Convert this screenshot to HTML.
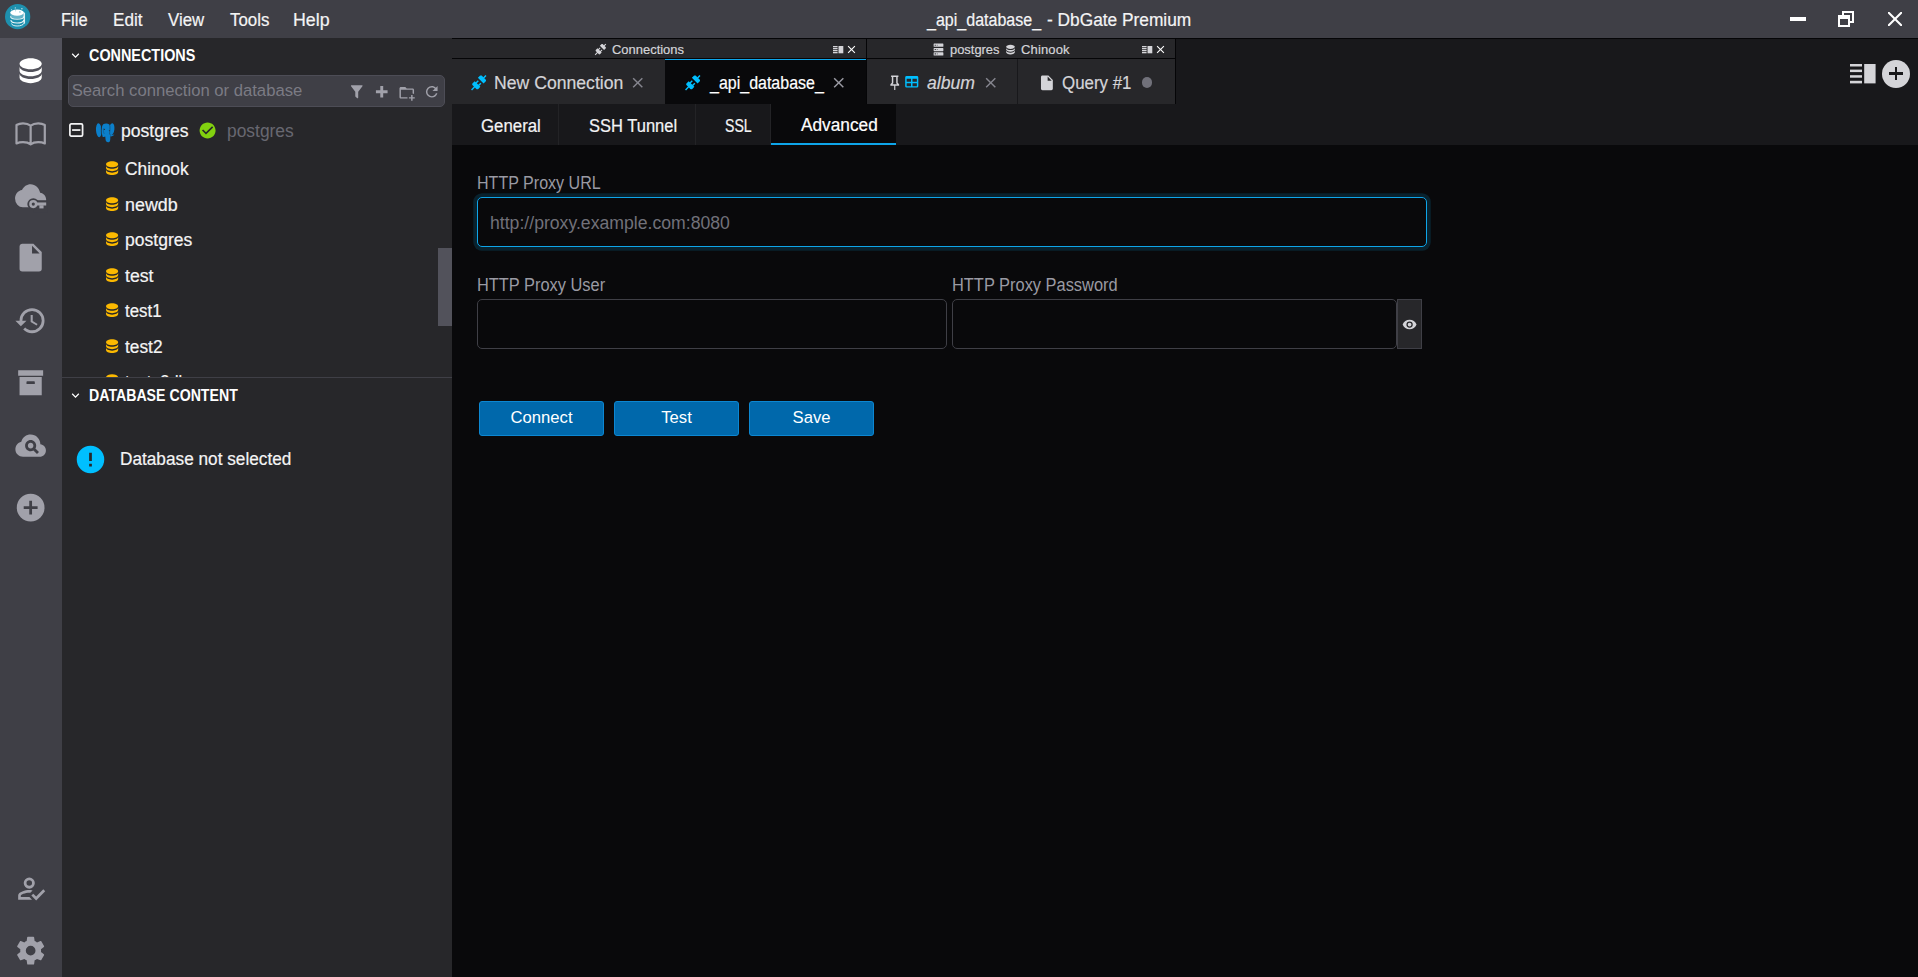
<!DOCTYPE html>
<html lang="en"><head><meta charset="utf-8">
<title>_api_database_ - DbGate Premium</title>
<style>
html,body{margin:0;padding:0;}
body{position:relative;width:1918px;height:977px;overflow:hidden;background:#09090b;font-family:"Liberation Sans", sans-serif;color:#f4f4f5;}
div,span,button{box-sizing:border-box;}
.t{position:absolute;white-space:nowrap;line-height:1;transform-origin:0 0;}
.i{position:absolute;display:block;overflow:visible;}
.b{position:absolute;}
#titlebar{left:0;top:0;width:1918px;height:38px;background:#3f3f46;}
#iconbar{left:0;top:38px;width:62px;height:939px;background:#3f3f46;}
#iconsel{left:0;top:38px;width:62px;height:62px;background:#52525b;}
#left{left:62px;top:38px;width:390px;height:939px;background:#27272a;}
#leftclip{left:62px;top:38px;width:390px;height:339px;overflow:hidden;}
#tabstrip{left:452px;top:38px;width:1466px;height:66px;background:#18181b;}
#subtabs{left:452px;top:104px;width:1466px;height:41px;background:#18181b;}
#content{left:452px;top:145px;width:1466px;height:832px;background:#09090b;}
.inp{position:absolute;border:1px solid #3f3f46;border-radius:5px;background:#09090b;}
.btn{position:absolute;top:401px;width:125px;height:35px;border:1px solid #0c87d2;border-radius:3px;background:#0068ab;color:#fff;font-family:"Liberation Sans", sans-serif;font-size:16.67px;padding:0 0 3px 0;margin:0;text-align:center;line-height:29px;}

</style></head><body>
<div id="titlebar" class="b"></div>
<svg class="i" style="left:5.00px;top:3.70px;width:25.3px;height:25.3px;" viewBox="0 0 25.3 25.3"><circle cx="12.650" cy="12.650" r="12.650" fill="#1e90ae"/><ellipse cx="12.100" cy="8.600" rx="6.800" ry="3.100" fill="#ffffff"/><path d="M5.300 8.600V11.600C5.300 13.300 8.300 14.700 12.100 14.700C15.900 14.700 18.900 13.300 18.900 11.600V8.600Z" fill="#ffffff" opacity="0.32"/><path d="M5.500 12.300C5.500 14.000 8.400 15.300 12.100 15.300C15.800 15.300 18.900 14.000 18.900 12.300" fill="none" stroke="#ffffff" stroke-width="1.100" opacity="0.85"/><path d="M5.900 16.000C5.900 17.700 8.600 19.000 12.100 19.000C15.600 19.000 18.900 17.700 18.900 16.000" fill="none" stroke="#ffffff" stroke-width="1.100" opacity="0.9"/><path d="M6.500 19.500C6.800 21.000 9.000 22.000 12.100 22.000C15.200 22.000 18.500 21.000 18.900 19.300" fill="none" stroke="#ffffff" stroke-width="1.000" opacity="0.85"/><path d="M19.300 8.600V19.600" fill="none" stroke="#ffffff" stroke-width="1.500" opacity="0.85"/><circle cx="10.300" cy="3.900" r="0.600" fill="#fff" opacity="0.8"/><circle cx="16.900" cy="4.700" r="0.700" fill="#fff" opacity="0.8"/><circle cx="6.500" cy="5.700" r="0.550" fill="#fff" opacity="0.8"/><circle cx="14.900" cy="7.900" r="0.700" fill="#1e90ae" opacity="0.7"/><circle cx="10.600" cy="6.700" r="0.500" fill="#1e90ae" opacity="0.6"/></svg>
<span class="t" style="left:61.38px;top:10.00px;font-size:18px;line-height:20px;color:#f4f4f5;transform:scaleX(0.9181);-webkit-text-stroke:0.2px currentColor;">File</span>
<span class="t" style="left:112.65px;top:10.00px;font-size:18px;line-height:20px;color:#f4f4f5;transform:scaleX(0.9528);-webkit-text-stroke:0.2px currentColor;">Edit</span>
<span class="t" style="left:167.50px;top:10.00px;font-size:18px;line-height:20px;color:#f4f4f5;transform:scaleX(0.9347);-webkit-text-stroke:0.2px currentColor;">View</span>
<span class="t" style="left:229.70px;top:10.00px;font-size:18px;line-height:20px;color:#f4f4f5;transform:scaleX(0.9376);-webkit-text-stroke:0.2px currentColor;">Tools</span>
<span class="t" style="left:293.11px;top:10.00px;font-size:18px;line-height:20px;color:#f4f4f5;transform:scaleX(0.9886);-webkit-text-stroke:0.2px currentColor;">Help</span>
<span class="t" style="left:926.99px;top:10.00px;font-size:18px;line-height:20px;color:#f4f4f5;transform:scaleX(0.8908);-webkit-text-stroke:0.2px currentColor;">_api_database_</span>
<span class="t" style="left:1047.00px;top:10.00px;font-size:18px;line-height:20px;color:#f4f4f5;transform:scaleX(0.9615);-webkit-text-stroke:0.2px currentColor;">- DbGate Premium</span>
<svg class="i" style="left:1786.00px;top:7.00px;width:24px;height:24px;" viewBox="0 0 24 24"><path fill="#fff" d="M20,14H4V10H20"/></svg>
<svg class="i" style="left:1834.20px;top:7.00px;width:24px;height:24px;" viewBox="0 0 24 24"><path fill="#fff" d="M4,8H8V4H20V16H16V20H4V8M16,8V14H18V6H10V8H16M6,12V18H14V12H6Z"/></svg>
<svg class="i" style="left:1882.80px;top:7.00px;width:24px;height:24px;" viewBox="0 0 24 24"><path fill="#fff" d="M13.46,12L19,17.54V19H17.54L12,13.46L6.46,19H5V17.54L10.54,12L5,6.46V5H6.46L12,10.54L17.54,5H19V6.46L13.46,12Z"/></svg>
<div id="iconbar" class="b"></div><div id="iconsel" class="b"></div>
<svg class="i" style="left:13.85px;top:53.75px;width:33.3px;height:33.3px;" viewBox="0 0 24 24"><path fill="#ffffff" d="M12,3C7.58,3 4,4.79 4,7C4,9.21 7.58,11 12,11C16.42,11 20,9.21 20,7C20,4.79 16.42,3 12,3M4,9V12C4,14.21 7.58,16 12,16C16.42,16 20,14.21 20,12V9C20,11.21 16.42,13 12,13C7.58,13 4,11.21 4,9M4,14V17C4,19.21 7.58,21 12,21C16.42,21 20,19.21 20,17V14C20,16.21 16.42,18 12,18C7.58,18 4,16.21 4,14Z"/></svg>
<svg class="i" style="left:13.85px;top:116.25px;width:33.3px;height:33.3px;" viewBox="0 0 24 24"><path fill="none" stroke="#a1a1aa" stroke-width="1.6" stroke-linejoin="round" d="M12 7.000C10.500 5.800 8.500 5.300 6.500 5.300C4.800 5.300 3.100 5.700 1.800 6.500V19.800C3.100 19.200 4.800 18.900 6.500 18.900C8.500 18.900 10.500 19.300 12 20.500C13.500 19.300 15.500 18.900 17.500 18.900C19.200 18.900 20.900 19.200 22.200 19.800V6.500C20.900 5.700 19.200 5.300 17.500 5.300C15.500 5.300 13.500 5.800 12 7.000ZM12 7.000V20.500"/></svg>
<svg class="i" style="left:13.85px;top:178.75px;width:33.3px;height:33.3px;" viewBox="0 0 24 24"><path fill="#a1a1aa" transform="translate(0.76 -0.45) scale(0.935 1.0375)" d="M19.35,10.03C18.67,6.59 15.64,4 12,4C9.11,4 6.6,5.64 5.35,8.03C2.34,8.36 0,10.9 0,14A6,6 0 0,0 6,20H19A5,5 0 0,0 24,15C24,12.36 21.95,10.22 19.35,10.03Z"/><rect x="13.900" y="15.300" width="10.100" height="8.700" fill="#3f3f46"/><circle cx="13.900" cy="18.100" r="4.300" fill="#3f3f46"/><circle cx="13.900" cy="18.100" r="2.950" fill="#a1a1aa"/><circle cx="13.900" cy="18.100" r="1.150" fill="#3f3f46"/><rect x="15.500" y="16.900" width="7.700" height="2.200" fill="#a1a1aa"/><rect x="18.300" y="18.900" width="3.000" height="2.300" fill="#a1a1aa"/></svg>
<svg class="i" style="left:13.85px;top:241.25px;width:33.3px;height:33.3px;" viewBox="0 0 24 24"><path fill="#a1a1aa" d="M13,9V3.5L18.5,9M6,2C4.89,2 4,2.89 4,4V20A2,2 0 0,0 6,22H18A2,2 0 0,0 20,20V8L14,2H6Z"/></svg>
<svg class="i" style="left:13.85px;top:303.75px;width:33.3px;height:33.3px;" viewBox="0 0 24 24"><path fill="#a1a1aa" d="M13.5,8H12V13L16.28,15.54L17,14.33L13.5,12.25V8M13,3A9,9 0 0,0 4,12H1L4.96,16.03L9,12H6A7,7 0 0,1 13,5A7,7 0 0,1 20,12A7,7 0 0,1 13,19C11.07,19 9.32,18.21 8.06,16.94L6.64,18.36C8.27,20 10.5,21 13,21A9,9 0 0,0 22,12A9,9 0 0,0 13,3"/></svg>
<svg class="i" style="left:13.85px;top:366.25px;width:33.3px;height:33.3px;" viewBox="0 0 24 24"><path fill="#a1a1aa" d="M3,3H21V7H3V3M4,8H20V21H4V8M9.5,11A0.5,0.5 0 0,0 9,11.5V13H15V11.5A0.5,0.5 0 0,0 14.5,11H9.5Z"/></svg>
<svg class="i" style="left:13.85px;top:428.75px;width:33.3px;height:33.3px;" viewBox="0 0 24 24"><path fill="#a1a1aa" d="M21.86 12.5C21.1 11.63 20.15 11.13 19 11C19 9.05 18.32 7.4 16.96 6.04C15.6 4.68 13.95 4 12 4C10.42 4 9 4.47 7.75 5.43S5.67 7.62 5.25 9.15C4 9.43 2.96 10.08 2.17 11.1S1 13.28 1 14.58C1 16.09 1.54 17.38 2.61 18.43C3.69 19.5 5 20 6.5 20H18.5C19.75 20 20.81 19.56 21.69 18.69C22.56 17.81 23 16.75 23 15.5C23 14.35 22.62 13.35 21.86 12.5M16.57 18L14 15.43C13.43 15.79 12.74 16 12 16C9.79 16 8 14.21 8 12S9.79 8 12 8 16 9.79 16 12C16 12.74 15.79 13.43 15.43 14L18 16.57L16.57 18M14 12C14 13.11 13.11 14 12 14S10 13.11 10 12 10.9 10 12 10 14 10.9 14 12Z"/></svg>
<svg class="i" style="left:13.85px;top:491.25px;width:33.3px;height:33.3px;" viewBox="0 0 24 24"><path fill="#a1a1aa" d="M17,13H13V17H11V13H7V11H11V7H13V11H17M12,2A10,10 0 0,0 2,12A10,10 0 0,0 12,22A10,10 0 0,0 22,12A10,10 0 0,0 12,2Z"/></svg>
<svg class="i" style="left:13.75px;top:871.65px;width:33.3px;height:33.3px;" viewBox="0 0 24 24"><path fill="#a1a1aa" d="M21.1,12.5L22.5,13.91L15.97,20.5L12.5,17L13.9,15.59L15.97,17.67L21.1,12.5M11,4A4,4 0 0,1 15,8A4,4 0 0,1 11,12A4,4 0 0,1 7,8A4,4 0 0,1 11,4M11,6A2,2 0 0,0 9,8A2,2 0 0,0 11,10A2,2 0 0,0 13,8A2,2 0 0,0 11,6M11,13C11.68,13 12.5,13.09 13.41,13.26L11.74,14.93L11,14.9C8.03,14.9 4.9,16.36 4.9,17V18.1H11.1L13,20H3V17C3,14.34 8.33,13 11,13Z"/></svg>
<svg class="i" style="left:13.85px;top:934.05px;width:33.3px;height:33.3px;" viewBox="0 0 24 24"><path fill="#a1a1aa" d="M12,15.5A3.5,3.5 0 0,1 8.5,12A3.5,3.5 0 0,1 12,8.5A3.5,3.5 0 0,1 15.5,12A3.5,3.5 0 0,1 12,15.5M19.43,12.97C19.47,12.65 19.5,12.33 19.5,12C19.5,11.67 19.47,11.34 19.43,11L21.54,9.37C21.73,9.22 21.78,8.95 21.66,8.73L19.66,5.27C19.54,5.05 19.27,4.96 19.05,5.05L16.56,6.05C16.04,5.66 15.5,5.32 14.87,5.07L14.5,2.42C14.46,2.18 14.25,2 14,2H10C9.75,2 9.54,2.18 9.5,2.42L9.13,5.07C8.5,5.32 7.96,5.66 7.44,6.05L4.95,5.05C4.73,4.96 4.46,5.05 4.34,5.27L2.34,8.73C2.21,8.95 2.27,9.22 2.46,9.37L4.57,11C4.53,11.34 4.5,11.67 4.5,12C4.5,12.33 4.53,12.65 4.57,12.97L2.46,14.63C2.27,14.78 2.21,15.05 2.34,15.27L4.34,18.73C4.46,18.95 4.73,19.03 4.95,18.95L7.44,17.94C7.96,18.34 8.5,18.68 9.13,18.93L9.5,21.58C9.54,21.82 9.75,22 10,22H14C14.25,22 14.46,21.82 14.5,21.58L14.87,18.93C15.5,18.67 16.04,18.34 16.56,17.94L19.05,18.95C19.27,19.03 19.54,18.95 19.66,18.73L21.66,15.27C21.78,15.05 21.73,14.78 21.54,14.63L19.43,12.97Z"/></svg>
<div id="left" class="b"></div>
<svg class="i" style="left:67.80px;top:47.50px;width:15px;height:15px;" viewBox="0 0 24 24"><path fill="#ffffff" d="M7.41,8.58L12,13.17L16.59,8.58L18,10L12,16L6,10L7.41,8.58Z"/></svg>
<div class="b" style="left:68px;top:75px;width:377px;height:32px;background:#3f3f46;border:1px solid #4d4d56;border-radius:5px;"></div>
<svg class="i" style="left:348.25px;top:83.45px;width:17.5px;height:17.5px;" viewBox="0 0 24 24"><path fill="#a1a1aa" d="M14,12V19.88C14.04,20.18 13.94,20.5 13.71,20.71C13.32,21.1 12.69,21.1 12.3,20.71L10.29,18.7C10.06,18.47 9.96,18.16 10,17.87V12H9.97L4.21,4.62C3.87,4.19 3.95,3.56 4.38,3.22C4.57,3.08 4.78,3 5,3V3H19V3C19.22,3 19.43,3.08 19.62,3.22C20.05,3.56 20.13,4.19 19.79,4.62L14.03,12H14Z"/></svg>
<svg class="i" style="left:373.05px;top:83.45px;width:17.5px;height:17.5px;" viewBox="0 0 24 24"><path fill="#a1a1aa" d="M20 14H14V20H10V14H4V10H10V4H14V10H20V14Z"/></svg>
<svg class="i" style="left:398.05px;top:83.65px;width:17.5px;height:17.5px;" viewBox="0 0 24 24"><path fill="#a1a1aa" d="M13 19C13 19.34 13.04 19.67 13.09 20H4C2.9 20 2 19.11 2 18V6C2 4.89 2.89 4 4 4H10L12 6H20C21.1 6 22 6.89 22 8V13.81C21.39 13.46 20.72 13.22 20 13.09V8H4V18H13.09C13.04 18.33 13 18.66 13 19M20 18V15H18V18H15V20H18V23H20V20H23V18H20Z"/></svg>
<svg class="i" style="left:423.25px;top:83.35px;width:17.5px;height:17.5px;" viewBox="0 0 24 24"><path fill="#a1a1aa" d="M17.65,6.35C16.2,4.9 14.21,4 12,4A8,8 0 0,0 4,12A8,8 0 0,0 12,20C15.73,20 18.84,17.45 19.73,14H17.65C16.83,16.33 14.61,18 12,18A6,6 0 0,1 6,12A6,6 0 0,1 12,6C13.66,6 15.14,6.69 16.22,7.78L13,11H20V4L17.65,6.35Z"/></svg>
<svg class="i" style="left:69.20px;top:123.00px;width:14.5px;height:14.0px;" viewBox="0 0 14.2 13.8"><rect x="0.850" y="0.850" width="12.500" height="12.100" rx="1.300" fill="none" stroke="#f4f4f5" stroke-width="1.700"/><rect x="3.000" y="6.100" width="8.200" height="1.700" fill="#f4f4f5"/></svg>
<svg class="i" style="left:95.70px;top:122.80px;width:18.4px;height:19.4px;" viewBox="0 0 18.4 19.4"><g fill="#0b7fca"><ellipse cx="2.800" cy="7.200" rx="2.800" ry="7.000" transform="rotate(-4 2.8 7.2)"/><ellipse cx="15.700" cy="6.100" rx="2.700" ry="6.000" transform="rotate(6 15.7 6.1)"/><path d="M6 4C6 1.500 8 0.400 10.200 0.400C12.600 0.400 14.700 1.800 14.700 4.500C14.700 7.500 14.300 10 14.300 12.500C14.300 14.500 14.500 16.500 14 18C13.500 19.600 11.300 19.800 10.300 18.600C9.300 17.400 9.600 15 9.200 13.600C8.500 14.200 7 14.300 6.500 13.400C5.600 11.500 6 6.500 6 4Z"/><path d="M14.300 11.900C15.600 12.300 17.200 11.900 18.400 11.600C17.700 12.800 15.800 13.700 14.300 13.400Z"/></g><path d="M5.800 1.800C5.000 5.000 5.000 10.500 6.000 13.000M13.600 1.500C14.400 4.000 13.700 9.000 13.500 11.500" stroke="#27272a" stroke-width="0.55" fill="none" opacity="0.8"/><path d="M7.600 5.300C7.200 7.500 7.400 9.500 8.300 11.000" stroke="#27272a" stroke-width="0.5" fill="none" opacity="0.55"/><circle cx="8.400" cy="6.400" r="0.650" fill="#27272a" opacity="0.8"/><circle cx="13.400" cy="7.600" r="0.600" fill="#27272a" opacity="0.7"/></svg>
<svg class="i" style="left:198.30px;top:120.60px;width:19.2px;height:19.2px;" viewBox="0 0 24 24"><path fill="#82d10f" d="M12 2C6.5 2 2 6.5 2 12S6.5 22 12 22 22 17.5 22 12 17.5 2 12 2M10 17L5 12L6.41 10.59L10 14.17L17.59 6.58L19 8L10 17Z"/></svg>
<svg class="i" style="left:102.60px;top:159.20px;width:18.2px;height:18.2px;" viewBox="0 0 24 24"><path fill="#fcb900" d="M12,3C7.58,3 4,4.79 4,7C4,9.21 7.58,11 12,11C16.42,11 20,9.21 20,7C20,4.79 16.42,3 12,3M4,9V12C4,14.21 7.58,16 12,16C16.42,16 20,14.21 20,12V9C20,11.21 16.42,13 12,13C7.58,13 4,11.21 4,9M4,14V17C4,19.21 7.58,21 12,21C16.42,21 20,19.21 20,17V14C20,16.21 16.42,18 12,18C7.58,18 4,16.21 4,14Z"/></svg>
<svg class="i" style="left:102.60px;top:195.00px;width:18.2px;height:18.2px;" viewBox="0 0 24 24"><path fill="#fcb900" d="M12,3C7.58,3 4,4.79 4,7C4,9.21 7.58,11 12,11C16.42,11 20,9.21 20,7C20,4.79 16.42,3 12,3M4,9V12C4,14.21 7.58,16 12,16C16.42,16 20,14.21 20,12V9C20,11.21 16.42,13 12,13C7.58,13 4,11.21 4,9M4,14V17C4,19.21 7.58,21 12,21C16.42,21 20,19.21 20,17V14C20,16.21 16.42,18 12,18C7.58,18 4,16.21 4,14Z"/></svg>
<svg class="i" style="left:102.60px;top:230.20px;width:18.2px;height:18.2px;" viewBox="0 0 24 24"><path fill="#fcb900" d="M12,3C7.58,3 4,4.79 4,7C4,9.21 7.58,11 12,11C16.42,11 20,9.21 20,7C20,4.79 16.42,3 12,3M4,9V12C4,14.21 7.58,16 12,16C16.42,16 20,14.21 20,12V9C20,11.21 16.42,13 12,13C7.58,13 4,11.21 4,9M4,14V17C4,19.21 7.58,21 12,21C16.42,21 20,19.21 20,17V14C20,16.21 16.42,18 12,18C7.58,18 4,16.21 4,14Z"/></svg>
<svg class="i" style="left:102.60px;top:266.10px;width:18.2px;height:18.2px;" viewBox="0 0 24 24"><path fill="#fcb900" d="M12,3C7.58,3 4,4.79 4,7C4,9.21 7.58,11 12,11C16.42,11 20,9.21 20,7C20,4.79 16.42,3 12,3M4,9V12C4,14.21 7.58,16 12,16C16.42,16 20,14.21 20,12V9C20,11.21 16.42,13 12,13C7.58,13 4,11.21 4,9M4,14V17C4,19.21 7.58,21 12,21C16.42,21 20,19.21 20,17V14C20,16.21 16.42,18 12,18C7.58,18 4,16.21 4,14Z"/></svg>
<svg class="i" style="left:102.60px;top:301.10px;width:18.2px;height:18.2px;" viewBox="0 0 24 24"><path fill="#fcb900" d="M12,3C7.58,3 4,4.79 4,7C4,9.21 7.58,11 12,11C16.42,11 20,9.21 20,7C20,4.79 16.42,3 12,3M4,9V12C4,14.21 7.58,16 12,16C16.42,16 20,14.21 20,12V9C20,11.21 16.42,13 12,13C7.58,13 4,11.21 4,9M4,14V17C4,19.21 7.58,21 12,21C16.42,21 20,19.21 20,17V14C20,16.21 16.42,18 12,18C7.58,18 4,16.21 4,14Z"/></svg>
<svg class="i" style="left:102.60px;top:336.70px;width:18.2px;height:18.2px;" viewBox="0 0 24 24"><path fill="#fcb900" d="M12,3C7.58,3 4,4.79 4,7C4,9.21 7.58,11 12,11C16.42,11 20,9.21 20,7C20,4.79 16.42,3 12,3M4,9V12C4,14.21 7.58,16 12,16C16.42,16 20,14.21 20,12V9C20,11.21 16.42,13 12,13C7.58,13 4,11.21 4,9M4,14V17C4,19.21 7.58,21 12,21C16.42,21 20,19.21 20,17V14C20,16.21 16.42,18 12,18C7.58,18 4,16.21 4,14Z"/></svg>
<span class="t" style="left:89.30px;top:47.00px;font-size:16px;line-height:17px;color:#ffffff;transform:scaleX(0.8992);font-weight:700;">CONNECTIONS</span>
<span class="t" style="left:71.70px;top:81.00px;font-size:16.67px;line-height:19px;color:#7b7b84;">Search connection or database</span>
<span class="t" style="left:120.57px;top:121.00px;font-size:18px;line-height:20px;color:#f4f4f5;transform:scaleX(0.9774);-webkit-text-stroke:0.2px currentColor;">postgres</span>
<span class="t" style="left:227.33px;top:121.00px;font-size:18px;line-height:20px;color:#686871;transform:scaleX(0.9664);">postgres</span>
<span class="t" style="left:125.05px;top:159.00px;font-size:18px;line-height:20px;color:#f4f4f5;transform:scaleX(0.9643);-webkit-text-stroke:0.2px currentColor;">Chinook</span>
<span class="t" style="left:124.56px;top:195.00px;font-size:18px;line-height:20px;color:#f4f4f5;transform:scaleX(0.9927);-webkit-text-stroke:0.2px currentColor;">newdb</span>
<span class="t" style="left:124.58px;top:230.00px;font-size:18px;line-height:20px;color:#f4f4f5;transform:scaleX(0.9737);-webkit-text-stroke:0.2px currentColor;">postgres</span>
<span class="t" style="left:125.30px;top:266.00px;font-size:18px;line-height:20px;color:#f4f4f5;transform:scaleX(0.9824);-webkit-text-stroke:0.2px currentColor;">test</span>
<span class="t" style="left:125.30px;top:301.00px;font-size:18px;line-height:20px;color:#f4f4f5;transform:scaleX(0.9356);-webkit-text-stroke:0.2px currentColor;">test1</span>
<span class="t" style="left:125.30px;top:337.00px;font-size:18px;line-height:20px;color:#f4f4f5;transform:scaleX(0.9612);-webkit-text-stroke:0.2px currentColor;">test2</span>
<span class="t" style="left:88.82px;top:387.00px;font-size:16px;line-height:17px;color:#ffffff;transform:scaleX(0.8841);font-weight:700;">DATABASE CONTENT</span>
<span class="t" style="left:119.94px;top:449.00px;font-size:18px;line-height:20px;color:#f4f4f5;transform:scaleX(0.9565);-webkit-text-stroke:0.2px currentColor;">Database not selected</span>
<div id="leftclip" class="b">
<svg class="i" style="left:40.60px;top:334.20px;width:18.2px;height:18.2px;" viewBox="0 0 24 24"><path fill="#fcb900" d="M12,3C7.58,3 4,4.79 4,7C4,9.21 7.58,11 12,11C16.42,11 20,9.21 20,7C20,4.79 16.42,3 12,3M4,9V12C4,14.21 7.58,16 12,16C16.42,16 20,14.21 20,12V9C20,11.21 16.42,13 12,13C7.58,13 4,11.21 4,9M4,14V17C4,19.21 7.58,21 12,21C16.42,21 20,19.21 20,17V14C20,16.21 16.42,18 12,18C7.58,18 4,16.21 4,14Z"/></svg>
<span class="t" style="left:63.30px;top:334.00px;font-size:18px;line-height:20px;color:#f4f4f5;transform:scaleX(0.9052);-webkit-text-stroke:0.2px currentColor;">test_2db</span>
</div>
<div class="b" style="left:438px;top:248px;width:14px;height:78px;background:#52525b;"></div>
<div class="b" style="left:62px;top:377px;width:390px;height:1px;background:#3f3f46;"></div>
<svg class="i" style="left:68.00px;top:387.80px;width:15px;height:15px;" viewBox="0 0 24 24"><path fill="#ffffff" d="M7.41,8.58L12,13.17L16.59,8.58L18,10L12,16L6,10L7.41,8.58Z"/></svg>
<svg class="i" style="left:73.60px;top:443.30px;width:33.0px;height:33.0px;" viewBox="0 0 24 24"><path fill="#00bfff" d="M13,13H11V7H13M13,17H11V15H13M12,2A10,10 0 0,0 2,12A10,10 0 0,0 12,22A10,10 0 0,0 22,12A10,10 0 0,0 12,2Z"/></svg>
<div id="tabstrip" class="b"></div>
<div class="b" style="left:452px;top:38px;width:1466px;height:1px;background:#050507;"></div>
<div class="b" style="left:452px;top:39px;width:414px;height:19px;background:#27272a;"></div>
<div class="b" style="left:452px;top:58px;width:724px;height:1px;background:#050507;"></div>
<div class="b" style="left:452px;top:59px;width:213px;height:45px;background:#27272a;"></div>
<div class="b" style="left:665px;top:59px;width:201px;height:45px;background:#09090b;border-top:1px solid #0ea5e9;"></div>
<div class="b" style="left:866px;top:39px;width:1px;height:65px;background:#050507;"></div>
<div class="b" style="left:867px;top:39px;width:308px;height:19px;background:#27272a;"></div>
<div class="b" style="left:867px;top:59px;width:308px;height:45px;background:#27272a;"></div>
<div class="b" style="left:1017px;top:59px;width:1px;height:45px;background:#18181b;"></div>
<div class="b" style="left:1175px;top:39px;width:1px;height:65px;background:#050507;"></div>
<svg class="i" style="left:594.00px;top:43.10px;width:13px;height:13px;" viewBox="0 0 24 24"><path fill="#d4d4d8" d="M21.4 7.5C22.2 8.3 22.2 9.6 21.4 10.3L18.6 13.1L10.8 5.3L13.6 2.5C14.4 1.7 15.7 1.7 16.4 2.5L18.2 4.3L21.2 1.3L22.6 2.7L19.6 5.7L21.4 7.5M15.6 13.3L14.2 11.9L11.4 14.7L9.3 12.6L12.1 9.8L10.7 8.4L7.9 11.2L6.4 9.8L3.6 12.6C2.8 13.4 2.8 14.7 3.6 15.4L5.4 17.2L1.4 21.2L2.8 22.6L6.8 18.6L8.6 20.4C9.4 21.2 10.7 21.2 11.4 20.4L14.2 17.6L12.8 16.2L15.6 13.3Z"/></svg>
<svg class="i" style="left:832.70px;top:45.60px;width:10.3px;height:7.3px;" viewBox="0 0 10.3 7.3"><g fill="#d4d4d8"><rect x="0" y="0" width="4.600" height="1.300"/><rect x="0" y="2.000" width="4.600" height="1.300"/><rect x="0" y="4.000" width="4.600" height="1.300"/><rect x="0" y="6.000" width="4.600" height="1.300"/><rect x="5.500" y="0" width="4.800" height="7.300"/></g></svg>
<svg class="i" style="left:844.90px;top:42.60px;width:13px;height:13px;" viewBox="0 0 24 24"><path fill="#ffffff" d="M19,6.41L17.59,5L12,10.59L6.41,5L5,6.41L10.59,12L5,17.59L6.41,19L12,13.41L17.59,19L19,17.59L13.41,12L19,6.41Z"/></svg>
<svg class="i" style="left:932.40px;top:42.70px;width:13px;height:13px;" viewBox="0 0 24 24"><path fill="#d4d4d8" d="M4,1H20A1,1 0 0,1 21,2V6A1,1 0 0,1 20,7H4A1,1 0 0,1 3,6V2A1,1 0 0,1 4,1M4,9H20A1,1 0 0,1 21,10V14A1,1 0 0,1 20,15H4A1,1 0 0,1 3,14V10A1,1 0 0,1 4,9M4,17H20A1,1 0 0,1 21,18V22A1,1 0 0,1 20,23H4A1,1 0 0,1 3,22V18A1,1 0 0,1 4,17M9,5H10V3H9V5M9,13H10V11H9V13M9,21H10V19H9V21M5,3V5H7V3H5M5,11V13H7V11H5M5,19V21H7V19H5Z"/></svg>
<svg class="i" style="left:1003.90px;top:42.80px;width:13px;height:13px;" viewBox="0 0 24 24"><path fill="#d4d4d8" d="M12,3C7.58,3 4,4.79 4,7C4,9.21 7.58,11 12,11C16.42,11 20,9.21 20,7C20,4.79 16.42,3 12,3M4,9V12C4,14.21 7.58,16 12,16C16.42,16 20,14.21 20,12V9C20,11.21 16.42,13 12,13C7.58,13 4,11.21 4,9M4,14V17C4,19.21 7.58,21 12,21C16.42,21 20,19.21 20,17V14C20,16.21 16.42,18 12,18C7.58,18 4,16.21 4,14Z"/></svg>
<svg class="i" style="left:1141.70px;top:45.60px;width:10.3px;height:7.3px;" viewBox="0 0 10.3 7.3"><g fill="#d4d4d8"><rect x="0" y="0" width="4.600" height="1.300"/><rect x="0" y="2.000" width="4.600" height="1.300"/><rect x="0" y="4.000" width="4.600" height="1.300"/><rect x="0" y="6.000" width="4.600" height="1.300"/><rect x="5.500" y="0" width="4.800" height="7.300"/></g></svg>
<svg class="i" style="left:1153.70px;top:42.60px;width:13px;height:13px;" viewBox="0 0 24 24"><path fill="#ffffff" d="M19,6.41L17.59,5L12,10.59L6.41,5L5,6.41L10.59,12L5,17.59L6.41,19L12,13.41L17.59,19L19,17.59L13.41,12L19,6.41Z"/></svg>
<svg class="i" style="left:470.25px;top:73.55px;width:17.5px;height:17.5px;" viewBox="0 0 24 24"><path fill="#00bfff" d="M21.4 7.5C22.2 8.3 22.2 9.6 21.4 10.3L18.6 13.1L10.8 5.3L13.6 2.5C14.4 1.7 15.7 1.7 16.4 2.5L18.2 4.3L21.2 1.3L22.6 2.7L19.6 5.7L21.4 7.5M15.6 13.3L14.2 11.9L11.4 14.7L9.3 12.6L12.1 9.8L10.7 8.4L7.9 11.2L6.4 9.8L3.6 12.6C2.8 13.4 2.8 14.7 3.6 15.4L5.4 17.2L1.4 21.2L2.8 22.6L6.8 18.6L8.6 20.4C9.4 21.2 10.7 21.2 11.4 20.4L14.2 17.6L12.8 16.2L15.6 13.3Z"/></svg>
<svg class="i" style="left:629.05px;top:73.85px;width:17.5px;height:17.5px;" viewBox="0 0 24 24"><path fill="#85858e" d="M19,6.41L17.59,5L12,10.59L6.41,5L5,6.41L10.59,12L5,17.59L6.41,19L12,13.41L17.59,19L19,17.59L13.41,12L19,6.41Z"/></svg>
<svg class="i" style="left:684.45px;top:73.55px;width:17.5px;height:17.5px;" viewBox="0 0 24 24"><path fill="#00bfff" d="M21.4 7.5C22.2 8.3 22.2 9.6 21.4 10.3L18.6 13.1L10.8 5.3L13.6 2.5C14.4 1.7 15.7 1.7 16.4 2.5L18.2 4.3L21.2 1.3L22.6 2.7L19.6 5.7L21.4 7.5M15.6 13.3L14.2 11.9L11.4 14.7L9.3 12.6L12.1 9.8L10.7 8.4L7.9 11.2L6.4 9.8L3.6 12.6C2.8 13.4 2.8 14.7 3.6 15.4L5.4 17.2L1.4 21.2L2.8 22.6L6.8 18.6L8.6 20.4C9.4 21.2 10.7 21.2 11.4 20.4L14.2 17.6L12.8 16.2L15.6 13.3Z"/></svg>
<svg class="i" style="left:829.85px;top:73.85px;width:17.5px;height:17.5px;" viewBox="0 0 24 24"><path fill="#9a9aa3" d="M19,6.41L17.59,5L12,10.59L6.41,5L5,6.41L10.59,12L5,17.59L6.41,19L12,13.41L17.59,19L19,17.59L13.41,12L19,6.41Z"/></svg>
<svg class="i" style="left:885.65px;top:73.55px;width:17.5px;height:17.5px;" viewBox="0 0 24 24"><path fill="#d4d4d8" d="M16,12V4H17V2H7V4H8V12L6,14V16H11.2V22H12.8V16H18V14L16,12M8.8,14L10,12.8V4H14V12.8L15.2,14H8.8Z"/></svg>
<svg class="i" style="left:902.95px;top:73.45px;width:17.5px;height:17.5px;" viewBox="0 0 24 24"><path fill="#00bfff" d="M5,4H19A2,2 0 0,1 21,6V18A2,2 0 0,1 19,20H5A2,2 0 0,1 3,18V6A2,2 0 0,1 5,4M5,8V12H11V8H5M13,8V12H19V8H13M5,14V18H11V14H5M13,14V18H19V14H13Z"/></svg>
<svg class="i" style="left:981.65px;top:73.85px;width:17.5px;height:17.5px;" viewBox="0 0 24 24"><path fill="#85858e" d="M19,6.41L17.59,5L12,10.59L6.41,5L5,6.41L10.59,12L5,17.59L6.41,19L12,13.41L17.59,19L19,17.59L13.41,12L19,6.41Z"/></svg>
<svg class="i" style="left:1037.60px;top:73.60px;width:17.8px;height:17.8px;" viewBox="0 0 24 24"><path fill="#d4d4d8" d="M13,9V3.5L18.5,9M6,2C4.89,2 4,2.89 4,4V20A2,2 0 0,0 6,22H18A2,2 0 0,0 20,20V8L14,2H6Z"/></svg>
<div class="b" style="left:1141.7px;top:77.1px;width:10.8px;height:10.8px;border-radius:50%;background:#71717a;"></div>
<span class="t" style="left:611.70px;top:42.00px;font-size:13px;line-height:15px;color:#d4d4d8;transform:scaleX(0.9963);-webkit-text-stroke:0.2px currentColor;">Connections</span>
<span class="t" style="left:950.00px;top:42.00px;font-size:13px;line-height:15px;color:#d4d4d8;transform:scaleX(0.9928);-webkit-text-stroke:0.2px currentColor;">postgres</span>
<span class="t" style="left:1021.10px;top:42.00px;font-size:13px;line-height:15px;color:#d4d4d8;letter-spacing:0.117px;-webkit-text-stroke:0.2px currentColor;">Chinook</span>
<span class="t" style="left:494.22px;top:73.00px;font-size:18px;line-height:20px;color:#d4d4d8;transform:scaleX(0.9795);-webkit-text-stroke:0.2px currentColor;">New Connection</span>
<span class="t" style="left:709.59px;top:73.00px;font-size:18px;line-height:20px;color:#ffffff;transform:scaleX(0.8885);-webkit-text-stroke:0.2px currentColor;">_api_database_</span>
<span class="t" style="left:927.30px;top:73.00px;font-size:18px;line-height:20px;color:#d4d4d8;transform:scaleX(0.9790);-webkit-text-stroke:0.2px currentColor;font-style:italic;">album</span>
<span class="t" style="left:1061.60px;top:73.00px;font-size:18px;line-height:20px;color:#d4d4d8;transform:scaleX(0.9388);-webkit-text-stroke:0.2px currentColor;">Query #1</span>
<svg class="i" style="left:1849.80px;top:64.00px;width:25.6px;height:19.4px;" viewBox="0 0 25.6 19.4"><g fill="#d4d4d8"><rect x="0" y="0" width="12" height="2.500"/><rect x="0" y="5.600" width="12" height="2.500"/><rect x="0" y="11.200" width="12" height="2.500"/><rect x="0" y="16.800" width="12" height="2.600"/><rect x="14.200" y="0" width="11.400" height="19.400"/></g></svg>
<div class="b" style="left:1882px;top:59.7px;width:28px;height:28px;border-radius:50%;background:#d4d4d8;"></div>
<div class="b" style="left:1889.2px;top:72.4px;width:13.6px;height:2.700px;background:#18181b;"></div>
<div class="b" style="left:1894.65px;top:66.9px;width:2.700px;height:13.600px;background:#18181b;"></div>
<div id="subtabs" class="b"></div>
<div class="b" style="left:558px;top:104px;width:1px;height:41px;background:#232326;"></div>
<div class="b" style="left:695px;top:104px;width:1px;height:41px;background:#232326;"></div>
<div class="b" style="left:770px;top:104px;width:1px;height:41px;background:#232326;"></div>
<div class="b" style="left:771px;top:104px;width:125px;height:41px;background:#09090b;border-bottom:2px solid #0ea5e9;"></div>
<span class="t" style="left:480.80px;top:116.00px;font-size:18px;line-height:20px;color:#f4f4f5;transform:scaleX(0.9344);-webkit-text-stroke:0.2px currentColor;">General</span>
<span class="t" style="left:588.90px;top:116.00px;font-size:18px;line-height:20px;color:#f4f4f5;transform:scaleX(0.9174);-webkit-text-stroke:0.2px currentColor;">SSH Tunnel</span>
<span class="t" style="left:725.30px;top:116.00px;font-size:18px;line-height:20px;color:#f4f4f5;transform:scaleX(0.7850);-webkit-text-stroke:0.2px currentColor;">SSL</span>
<span class="t" style="left:800.90px;top:115.00px;font-size:18px;line-height:20px;color:#ffffff;transform:scaleX(0.9589);-webkit-text-stroke:0.2px currentColor;">Advanced</span>
<div id="content" class="b"></div>
<div class="inp" style="left:477px;top:197px;width:950px;height:50px;border-color:#0ea5e9;box-shadow:0 0 0 3.75px rgba(14,165,233,0.16);"></div>
<div class="inp" style="left:477px;top:299px;width:470px;height:50px;"></div>
<div class="inp" style="left:952px;top:299px;width:445px;height:50px;"></div>
<div class="b" style="left:1397px;top:299px;width:25px;height:50px;background:#27272a;border:1px solid #3f3f46;"></div>
<svg class="i" style="left:1401.70px;top:316.90px;width:15.2px;height:15.2px;" viewBox="0 0 24 24"><path fill="#d4d4d8" d="M12,9A3,3 0 0,0 9,12A3,3 0 0,0 12,15A3,3 0 0,0 15,12A3,3 0 0,0 12,9M12,17A5,5 0 0,1 7,12A5,5 0 0,1 12,7A5,5 0 0,1 17,12A5,5 0 0,1 12,17M12,4.5C7,4.5 2.73,7.61 1,12C2.73,16.39 7,19.5 12,19.5C17,19.5 21.27,16.39 23,12C21.27,7.61 17,4.5 12,4.5Z"/></svg>
<span class="t" style="left:476.61px;top:173.00px;font-size:18px;line-height:20px;color:#9a9aa3;transform:scaleX(0.8920);">HTTP Proxy URL</span>
<span class="t" style="left:489.62px;top:213.00px;font-size:18px;line-height:20px;color:#71717a;transform:scaleX(0.9800);">http://proxy.example.com:8080</span>
<span class="t" style="left:476.59px;top:275.00px;font-size:18px;line-height:20px;color:#9a9aa3;transform:scaleX(0.9106);">HTTP Proxy User</span>
<span class="t" style="left:951.79px;top:275.00px;font-size:18px;line-height:20px;color:#9a9aa3;transform:scaleX(0.9115);">HTTP Proxy Password</span>
<button class="btn" style="left:479px;">Connect</button>
<button class="btn" style="left:614px;">Test</button>
<button class="btn" style="left:749px;">Save</button>
</body></html>
